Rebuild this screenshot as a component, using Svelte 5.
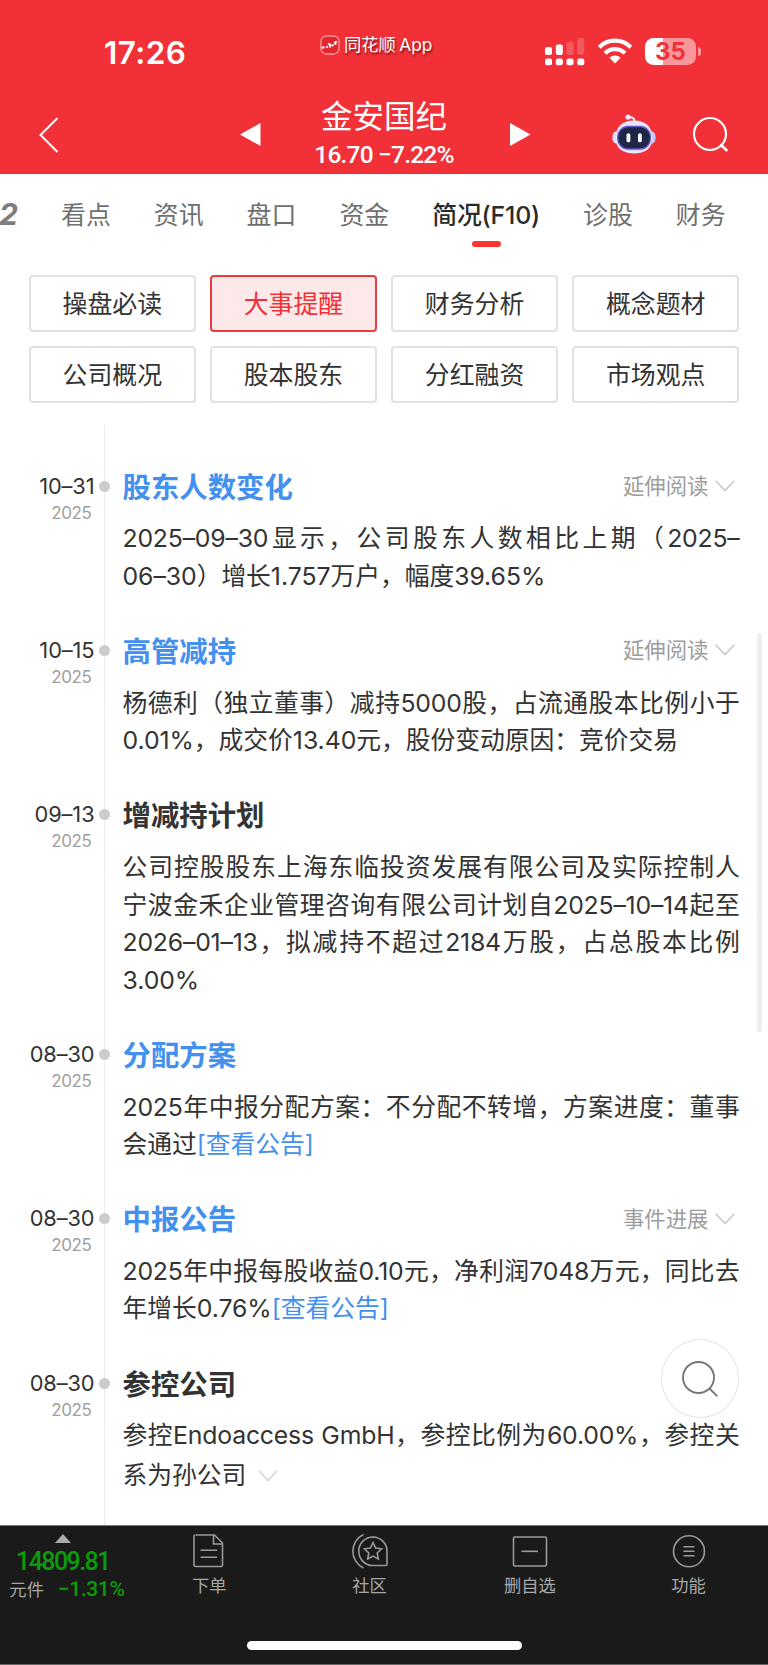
<script lang="ts">
  type Line = { text: string; link?: string };
  type Event = {
    date: string;
    year: string;
    title: string;
    linked?: boolean;
    more?: string;
    folded?: boolean;
    lines: Line[];
  };

  const tabs = ['看点', '资讯', '盘口', '资金', '简况(F10)', '诊股', '财务'];
  const sections = ['操盘必读', '大事提醒', '财务分析', '概念题材', '公司概况', '股本股东', '分红融资', '市场观点'];

  let activeTab = '简况(F10)';
  let activeSection = '大事提醒';

  const events: Event[] = [
    {
      date: '10–31',
      year: '2025',
      title: '股东人数变化',
      linked: true,
      more: '延伸阅读',
      lines: [{ text: '2025–09–30显示，公司股东人数相比上期（2025–' }, { text: '06–30）增长1.757万户，幅度39.65%' }],
    },
    {
      date: '10–15',
      year: '2025',
      title: '高管减持',
      linked: true,
      more: '延伸阅读',
      lines: [{ text: '杨德利（独立董事）减持5000股，占流通股本比例小于' }, { text: '0.01%，成交价13.40元，股份变动原因：竞价交易' }],
    },
    {
      date: '09–13',
      year: '2025',
      title: '增减持计划',
      lines: [
        { text: '公司控股股东上海东临投资发展有限公司及实际控制人' },
        { text: '宁波金禾企业管理咨询有限公司计划自2025–10–14起至' },
        { text: '2026–01–13，拟减持不超过2184万股，占总股本比例' },
        { text: '3.00%' },
      ],
    },
    {
      date: '08–30',
      year: '2025',
      title: '分配方案',
      linked: true,
      lines: [{ text: '2025年中报分配方案：不分配不转增，方案进度：董事' }, { text: '会通过', link: '[查看公告]' }],
    },
    {
      date: '08–30',
      year: '2025',
      title: '中报公告',
      linked: true,
      more: '事件进展',
      lines: [{ text: '2025年中报每股收益0.10元，净利润7048万元，同比去' }, { text: '年增长0.76%', link: '[查看公告]' }],
    },
    {
      date: '08–30',
      year: '2025',
      title: '参控公司',
      folded: true,
      lines: [{ text: '参控Endoaccess GmbH，参控比例为60.00%，参控关' }, { text: '系为孙公司' }],
    },
  ];
</script>

<div class="screen">
  <header>
    <div class="status">
      <span class="time">17:26</span>
      <span class="source">
        <svg width="20" height="20" viewBox="0 0 20 20" fill="none">
          <rect x="1" y="1" width="18" height="18" rx="5.5" fill="#e3262c" stroke="#f79a9d" stroke-width="1.3" />
          <path d="M1.5 12.5h3M6 12.5l2-1M8 8.5l2 1v3M11.500 11l2-1.500M14 8l3-1.500M15.500 6v4" stroke="#fff" stroke-width="1.8" />
        </svg>
        同花顺 App
      </span>
      <span class="indicators">
        <svg width="40" height="28" viewBox="0 0 40 28" fill="#fff">
          <rect x="0" y="9" width="7" height="8" rx="2" />
          <rect x="10.800" y="6.500" width="7" height="10.500" rx="2" />
          <rect x="21.500" y="3.500" width="7" height="13.500" rx="2" opacity=".2" />
          <rect x="32.300" y="0" width="7" height="17" rx="2" opacity=".2" />
          <rect x="0" y="20.500" width="7" height="6.800" rx="2" />
          <rect x="10.800" y="20.500" width="7" height="6.800" rx="2" />
          <rect x="21.500" y="20.500" width="7" height="6.800" rx="2" />
          <rect x="32.300" y="20.500" width="7" height="6.800" rx="2" />
        </svg>
        <svg class="wifi" width="36" height="26" viewBox="0 0 36 26" fill="none" stroke="#fff" stroke-width="4.300">
          <path d="M2.200 9.200a22.500 22.500 0 0 1 31.600 0" />
          <path d="M8 15.300a14.200 14.200 0 0 1 20 0" />
          <path d="M18 25.500l-5.600-5.700a8.200 8.200 0 0 1 11.200 0z" fill="#fff" stroke="none" />
        </svg>
        <span class="battery">35</span>
        <span class="cap"></span>
      </span>
    </div>
    <div class="title-bar">
      <svg class="back" width="20" height="36" viewBox="0 0 20 36" fill="none" stroke="#fff" stroke-width="2">
        <path d="M18.500 1L1.500 18l17 17" />
      </svg>
      <svg class="prev" width="21" height="23" viewBox="0 0 21 23"><path d="M0 11.500L20.500 0v23z" fill="#fff" /></svg>
      <div class="stock">
        <h1>金安国纪</h1>
        <p class="quote">16.70 −7.22%</p>
      </div>
      <svg class="next" width="21" height="23" viewBox="0 0 21 23"><path d="M20.500 11.500L0 0v23z" fill="#fff" /></svg>
      <svg class="robot" width="44" height="40" viewBox="0 0 44 40">
        <path d="M16 3.500c5-.8 6.500 1 6.500 4" fill="none" stroke="#e4e6fb" stroke-width="2" />
        <circle cx="16" cy="3" r="2.600" fill="#e8edff" />
        <ellipse cx="3.800" cy="23.500" rx="3.500" ry="6" fill="#e2e0f8" />
        <ellipse cx="40.200" cy="23.500" rx="3.500" ry="6" fill="#c4c2ee" />
        <path d="M22 6.500c12 0 18.500 7 18.500 17.500S33 39.500 22 39.500 3.500 34.500 3.500 24 10 6.500 22 6.500z" fill="#e4e5f6" />
        <rect x="5.800" y="12.500" width="32.600" height="22.500" rx="10.500" fill="#1e2747" stroke="#6553c8" stroke-width="1.300" />
        <rect x="14.500" y="19.300" width="3.800" height="9" rx="1.900" fill="#fff" />
        <rect x="26" y="19.300" width="3.800" height="9" rx="1.900" fill="#fff" />
      </svg>
      <svg class="search" width="37" height="37" viewBox="0 0 37 37" fill="none" stroke="#fff" stroke-width="2.200">
        <circle cx="18" cy="18" r="16" />
        <path d="M28.500 28.500l6.800 6.500" stroke-width="2.800" />
      </svg>
    </div>
  </header>

  <nav class="tabs">
    <span class="cut">2</span>
    {#each tabs as tab}
      <button type="button" class:active={tab === activeTab} on:click={() => (activeTab = tab)}>{tab}</button>
    {/each}
  </nav>

  <div class="sections">
    {#each sections as section}
      <button type="button" class:active={section === activeSection} on:click={() => (activeSection = section)}>
        {section}
      </button>
    {/each}
  </div>

  <main class="timeline">
    {#each events as event}
      <article>
        <div class="when">
          <time>{event.date}</time>
          <small>{event.year}</small>
        </div>
        <i class="dot"></i>
        <div class="content">
          <div class="head">
            <h2 class:linked={event.linked}>{event.title}</h2>
            {#if event.more}
              <span class="more">
                {event.more}
                <svg width="20" height="12" viewBox="0 0 20 12" fill="none" stroke="#c8c8c8" stroke-width="1.600">
                  <path d="M.7.800L10 10.500 19.300.800" />
                </svg>
              </span>
            {/if}
          </div>
          <div class="text" class:folded={event.folded}>
            {#each event.lines as line, i}
              <p class:full={i < event.lines.length - 1}>
                {line.text}{#if line.link}<a href="#notice">{line.link}</a>{/if}{#if event.folded && i === event.lines.length - 1}
                  <svg width="20" height="12" viewBox="0 0 20 12" fill="none" stroke="#d4d4d4" stroke-width="1.600">
                    <path d="M.7.800L10 10.500 19.300.800" />
                  </svg>
                {/if}
              </p>
            {/each}
          </div>
        </div>
      </article>
    {/each}
    <div class="scrollbar"></div>
    <button type="button" class="float-search" aria-label="搜索">
      <svg width="36" height="36" viewBox="0 0 36 36" fill="none" stroke="#777" stroke-width="1.900">
        <circle cx="16.500" cy="16.500" r="15.500" />
        <path d="M27.500 27.500l7.800 7.800" />
      </svg>
    </button>
  </main>

  <footer>
    <div class="index">
      <i class="up"></i>
      <strong>14809.81</strong>
      <div class="change"><span>元件</span><b>−1.31%</b></div>
    </div>
    <div class="action">
      <svg width="36" height="36" viewBox="0 0 36 36" fill="none" stroke="#999" stroke-width="1.600">
        <path d="M5 2h18.500l8 8v22a1.500 1.500 0 0 1-1.500 1.500H4.500A1.500 1.500 0 0 1 3 32V3.500A1.500 1.500 0 0 1 4.500 2" />
        <path d="M22.500 2v9h9M9.500 17.300h16.500M9.500 24.300h16.500" />
      </svg>
      下单
    </div>
    <div class="action community">
      <svg width="36" height="36" viewBox="0 0 36 36" fill="none" stroke="#999" stroke-width="1.600">
        <path d="M11.500 1.500a18.500 18.500 0 0 0 0 33.500M21 4a14.200 14.200 0 1 0 0 28.500h12.500a1.500 1.500 0 0 0 1.500-1.500V18A14.200 14.200 0 0 0 21 4z" />
        <path d="M21 9.500l2.600 5.500 6 .800-4.400 4.200 1.100 6-5.300-2.900-5.300 2.900 1.100-6-4.400-4.200 6-.800z" />
      </svg>
      社区
    </div>
    <div class="action">
      <svg width="36" height="36" viewBox="0 0 36 36" fill="none" stroke="#999" stroke-width="1.600">
        <rect x="1.500" y="4" width="33" height="29" rx="1.500" />
        <path d="M9.500 18.300h16.500" />
      </svg>
      删自选
    </div>
    <div class="action">
      <svg width="36" height="36" viewBox="0 0 36 36" fill="none" stroke="#999" stroke-width="1.600">
        <circle cx="18" cy="18.300" r="15.500" />
        <path d="M12.500 13.800h11M12.500 18.300h11M12.500 22.800h11" />
      </svg>
      功能
    </div>
    <div class="home"></div>
  </footer>
</div>

<style>
  :global(body) {
    margin: 0;
    background: #fff;
  }

  .screen {
    display: flex;
    flex-direction: column;
    width: 768px;
    height: 1665px;
    overflow: hidden;
    background: #fff;
    color: #333;
    font-family: Inter, 'Noto Sans CJK SC', sans-serif;
  }

  .screen :is(h1, h2, p) {
    margin: 0;
    font-weight: 400;
  }

  button {
    padding: 0;
    border: 0;
    background: none;
    color: inherit;
    font: inherit;
    cursor: pointer;
  }

  svg {
    flex: none;
    display: block;
  }

  header {
    box-sizing: border-box;
    flex: none;
    height: 174px;
    background: #f23037;
    color: #fff;
  }

  .status {
    display: flex;
    height: 92px;
    padding-left: 104px;
  }

  .time {
    width: 216px;
    padding-top: 34px;
    font-size: 31.5px;
    font-weight: 600;
    line-height: 38px;
    letter-spacing: 0.4px;
  }

  .source {
    display: flex;
    gap: 4px;
    align-items: center;
    width: 225px;
    height: 24px;
    padding-top: 33px;
    font-size: 17.3px;
    line-height: 24px;
    white-space: nowrap;
    word-spacing: -1.5px;
    text-shadow: 1px 2px 2px rgba(60, 0, 0, 0.6);
  }

  .indicators {
    display: flex;
    align-items: flex-start;
    padding-top: 38px;
  }

  .wifi {
    margin-left: 12px;
  }

  .battery {
    width: 51px;
    height: 27px;
    margin-left: 12px;
    border-radius: 8.5px;
    background: linear-gradient(90deg, #fff 35%, #f8979b 35%);
    color: #f23037;
    font-size: 24px;
    font-weight: 700;
    line-height: 27px;
    text-align: center;
  }

  .cap {
    width: 3px;
    height: 9px;
    margin: 9px 0 0 2px;
    border-radius: 0 4px 4px 0;
    background: #f8979b;
  }

  .title-bar {
    display: flex;
    align-items: flex-start;
    padding-left: 39px;
  }

  .back {
    margin-top: 25px;
  }

  .prev {
    margin: 31px 0 0 181px;
  }

  .stock {
    width: 246px;
    margin-right: 4px;
    padding-top: 5px;
    text-align: center;
  }

  h1 {
    font-size: 31.5px;
    line-height: 40px;
  }

  .stock .quote {
    margin-top: 2px;
    font-family: Roboto, sans-serif;
    font-size: 24.5px;
    font-weight: 500;
    line-height: 31px;
    letter-spacing: -0.8px;
  }

  .next {
    margin: 31px 0 0 -1px;
  }

  .robot {
    margin: 22px 0 0 81px;
  }

  .search {
    margin: 24px 0 0 36px;
  }

  .tabs {
    display: flex;
    gap: 43px;
    flex: none;
    height: 101px;
    color: #6f6f6f;
    font-size: 24.9px;
    line-height: 36px;
    white-space: nowrap;
  }

  .cut {
    display: flex;
    justify-content: flex-end;
    width: 18px;
    padding-top: 22px;
    color: #7d7d7d;
    font-size: 30px;
    font-style: italic;
    font-weight: 700;
  }

  .tabs button {
    display: flex;
    flex-direction: column;
    align-items: center;
    padding-top: 23px;
  }

  .tabs .active {
    color: #2b2b2b;
    font-weight: 500;
    letter-spacing: -0.2px;
  }

  .tabs .active::after {
    content: '';
    width: 29px;
    height: 6px;
    margin-top: 8px;
    border-radius: 3px;
    background: #fc3730;
  }

  .sections {
    display: grid;
    grid-template-columns: repeat(4, 1fr);
    gap: 14px 14.5px;
    flex: none;
    padding: 0 29px;
  }

  .sections button {
    box-sizing: border-box;
    height: 57px;
    border: 2px solid #e1e1e1;
    border-radius: 4px;
    font-size: 24.9px;
    line-height: 55px;
  }

  .sections .active {
    border-color: #ec3a3e;
    background: #fee9ea;
    color: #ee3236;
  }

  .timeline {
    position: relative;
    flex: none;
    height: 1100px;
    margin-top: 22px;
    box-sizing: border-box;
    padding-top: 43.5px;
    background: linear-gradient(#ebebeb, #ebebeb) 104px 0 / 1px 100% no-repeat;
  }

  article {
    display: flex;
    margin-bottom: 38px;
  }

  .when {
    display: flex;
    flex-direction: column;
    align-items: flex-end;
    width: 94.5px;
    line-height: 34px;
  }

  time {
    font-size: 21.8px;
    letter-spacing: -0.1px;
  }

  small {
    margin: 1px 3px 0 0;
    color: #a0a0a0;
    font-size: 17px;
    line-height: 18px;
    letter-spacing: -0.4px;
  }

  .dot {
    width: 11px;
    height: 11px;
    margin: 12px 12.500px 0 4.500px;
    border-radius: 50%;
    background: #ccc;
  }

  .content {
    width: 617px;
  }

  .head {
    display: flex;
    justify-content: space-between;
    height: 36px;
    line-height: 36px;
  }

  .screen h2 {
    padding-top: 1px;
    font-size: 28.4px;
    font-weight: 700;
  }

  .screen h2.linked {
    color: #4390ee;
  }

  .more {
    display: flex;
    gap: 6px;
    align-items: center;
    height: 35px;
    padding-right: 5px;
    color: #9d9d9d;
    font-size: 21.4px;
  }

  .text {
    margin-top: 15.7px;
    margin-bottom: -0.5px;
    font-size: 24.8px;
    line-height: 37.6px;
    white-space: nowrap;
  }

  .text p {
    letter-spacing: -0.05px;
  }

  .text .full {
    text-align: justify;
    text-align-last: justify;
    letter-spacing: -0.2px;
    white-space: normal;
  }

  .text.folded p:last-child {
    display: flex;
    align-items: center;
    gap: 12px;
    padding-top: 2px;
  }

  a {
    color: #4390ee;
    text-decoration: none;
  }

  .scrollbar {
    position: absolute;
    top: 208px;
    left: 757px;
    width: 5px;
    height: 399px;
    border-radius: 3px;
    background: #efefef;
  }

  .float-search {
    box-sizing: border-box;
    position: absolute;
    top: 914px;
    left: 661px;
    display: flex;
    width: 78px;
    height: 79px;
    padding: 21px 0 0 20px;
    border: 1px solid #e4e4e4;
    border-radius: 50%;
    background: #fff;
  }

  footer {
    position: relative;
    display: flex;
    flex: none;
    box-sizing: border-box;
    height: 140px;
    border-top: 1px solid #777;
    border-bottom: 1px solid #666;
    background: #1a1a1a;
    color: #a6a6a6;
  }

  .index {
    display: flex;
    flex-direction: column;
    align-items: center;
    width: 126px;
    margin-right: 4px;
    padding-top: 8px;
  }

  .up {
    border: 8px solid transparent;
    border-top: 0;
    border-bottom: 9px solid #aaa;
  }

  .index strong,
  .index b {
    color: #0a9c0a;
    font-family: Roboto, sans-serif;
    font-weight: 500;
  }

  .index strong {
    margin-top: 4px;
    font-size: 25px;
    line-height: 30px;
    letter-spacing: -1.6px;
  }

  .change {
    display: flex;
    gap: 14px;
    align-items: center;
    padding-left: 8px;
    font-size: 17.3px;
    line-height: 25px;
    white-space: nowrap;
  }

  .index b {
    font-size: 21px;
    letter-spacing: -0.4px;
  }

  .action {
    display: flex;
    flex-direction: column;
    align-items: center;
    width: 159px;
    padding-top: 7px;
    font-size: 17.3px;
    line-height: 26px;
  }

  .community {
    width: 162px;
  }

  .action svg {
    margin-bottom: 4px;
  }

  .home {
    position: absolute;
    bottom: 14px;
    left: 247px;
    width: 275px;
    height: 9px;
    border-radius: 5px;
    background: #fff;
  }
</style>
